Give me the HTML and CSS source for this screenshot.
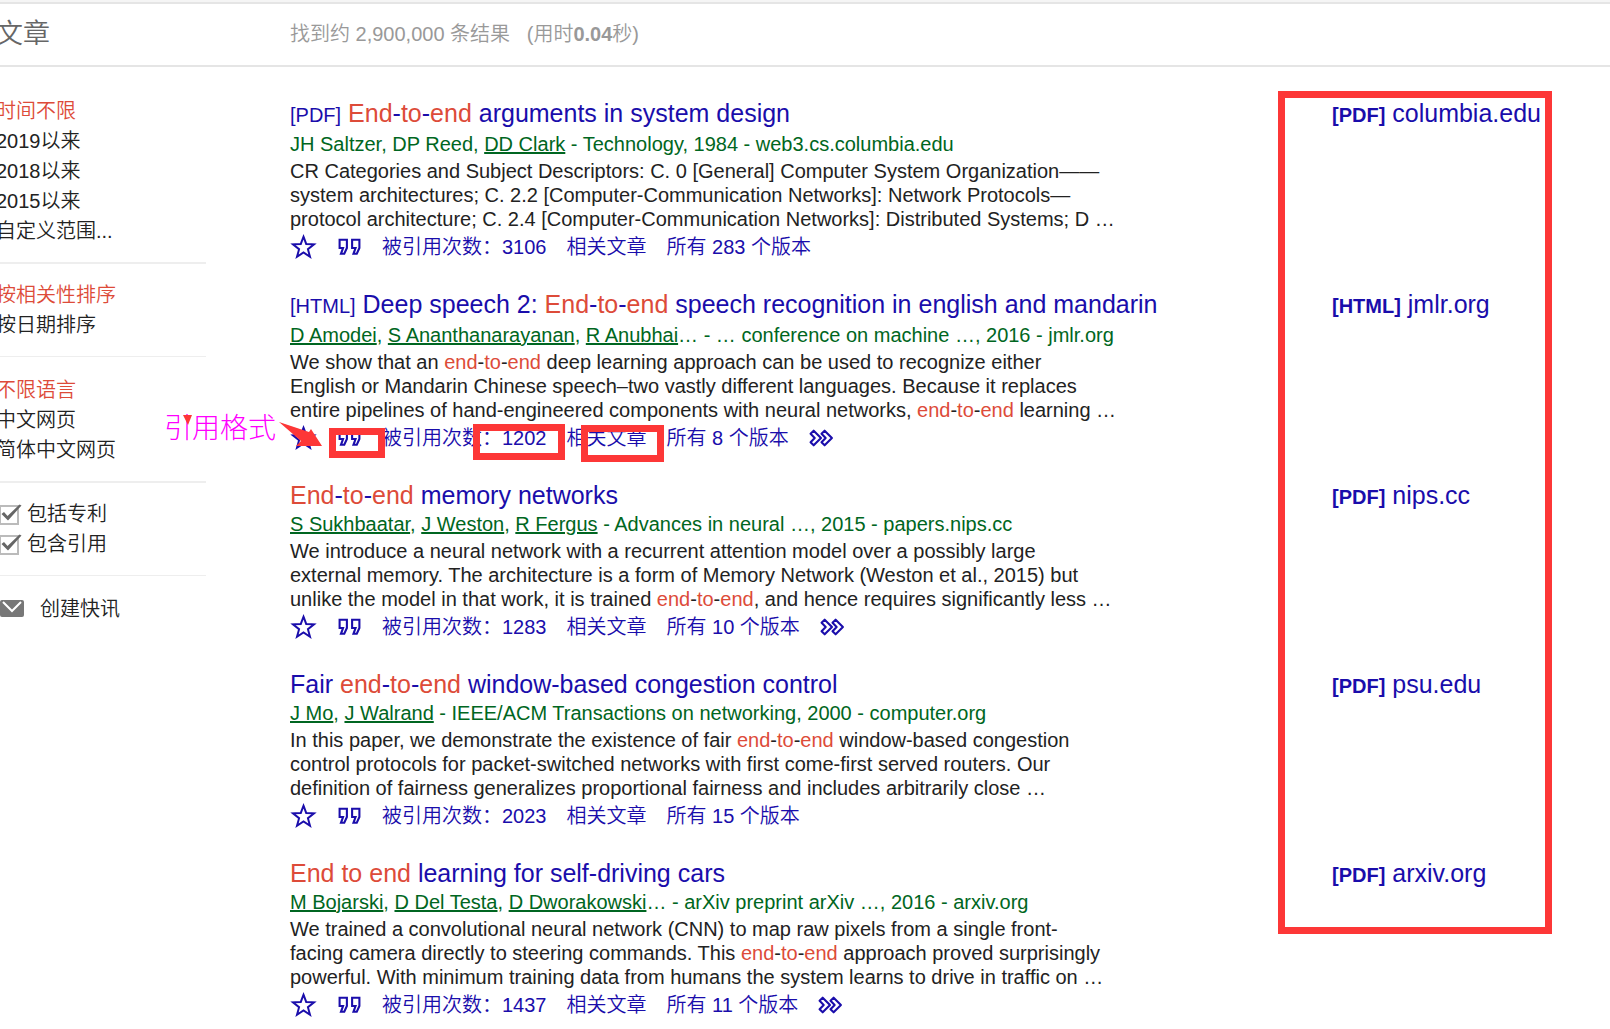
FILE: index.html
```html
<!DOCTYPE html>
<html lang="zh-CN">
<head>
<meta charset="utf-8">
<title>End-to-end - 学术搜索</title>
<link rel="stylesheet" href="styles.css">
</head>
<body>
<svg class="sprite" aria-hidden="true">
  <symbol id="star" viewBox="0 0 22 22"><path d="M11 2.6 13.2 8.5 19.6 8.8 14.6 12.8 16.3 19 11 15.5 5.7 19 7.4 12.8 2.4 8.8 8.8 8.5Z"/></symbol>
  <symbol id="quote" viewBox="0 0 24 22"><path d="M2.500 4H9.500V12L7 17.500H3.800L5.800 12H2.500ZM14.500 4H21.500V12L19 17.500H15.800L17.800 12H14.500Z"/></symbol>
  <symbol id="more" viewBox="0 0 24 22"><path stroke-linejoin="round" d="M1.500 7 4.500 4 11.500 11 4.500 18 1.500 15 5.500 11ZM12 7 15 4 22 11 15 18 12 15 16 11Z"/></symbol>
</svg>
<div class="page">
  <header class="topbar">
    <h1 class="section">文章</h1>
    <p class="count">找到约 2,900,000 条结果 &nbsp; (用时<b>0.04</b>秒)</p>
  </header>
  <div class="layout">
    <nav class="sidebar">
      <ul class="group">
        <li><a class="current" href="#">时间不限</a></li>
        <li><a href="#">2019以来</a></li>
        <li><a href="#">2018以来</a></li>
        <li><a href="#">2015以来</a></li>
        <li><a href="#">自定义范围...</a></li>
      </ul>
      <ul class="group">
        <li><a class="current" href="#">按相关性排序</a></li>
        <li><a href="#">按日期排序</a></li>
      </ul>
      <ul class="group">
        <li><a class="current" href="#">不限语言</a></li>
        <li><a href="#">中文网页</a></li>
        <li><a href="#">简体中文网页</a></li>
      </ul>
      <ul class="group">
        <li><label class="check"><input type="checkbox" checked><svg viewBox="0 0 26 22"><path class="box" d="M4 3H22V21H4Z"/><path class="tick" d="M5.500 11 8 9 11.500 13 23.500 1.500 25.500 2.500 12 17.500Z"/></svg>包括专利</label></li>
        <li><label class="check"><input type="checkbox" checked><svg viewBox="0 0 26 22"><path class="box" d="M4 3H22V21H4Z"/><path class="tick" d="M5.500 11 8 9 11.500 13 23.500 1.500 25.500 2.500 12 17.500Z"/></svg>包含引用</label></li>
      </ul>
      <ul class="group">
        <li><a class="alert" href="#"><svg viewBox="0 0 24 18"><rect width="24" height="17" rx="2"/><path d="M3 2 12 11 21 2"/></svg>创建快讯</a></li>
      </ul>
    </nav>
    <main class="results">
      <article class="result">
        <div class="body">
          <h2 class="title tagged"><span class="tag">[PDF]</span> <a href="#"><em>End</em>-<em>to</em>-<em>end</em> arguments in system design</a></h2>
          <p class="authors">JH Saltzer, DP Reed, <a href="#">DD Clark</a> - Technology, 1984 - web3.cs.columbia.edu</p>
          <p class="snippet">CR Categories and Subject Descriptors: C. 0 [General] Computer System Organization——<br>system architectures; C. 2.2 [Computer-Communication Networks]: Network Protocols—<br>protocol architecture; C. 2.4 [Computer-Communication Networks]: Distributed Systems; D …</p>
          <div class="links"><a href="#" aria-label="保存"><svg class="star"><use href="#star"/></svg></a><a href="#" aria-label="引用"><svg class="quote"><use href="#quote"/></svg></a><a href="#">被引用次数：3106</a><a href="#">相关文章</a><a href="#">所有 283 个版本</a></div>
        </div>
        <p class="source"><a href="#"><b>[PDF]</b> columbia.edu</a></p>
      </article>
      <article class="result">
        <div class="body">
          <h2 class="title tagged"><span class="tag">[HTML]</span> <a href="#">Deep speech 2: <em>End</em>-<em>to</em>-<em>end</em> speech recognition in english and mandarin</a></h2>
          <p class="authors"><a href="#">D Amodei</a>, <a href="#">S Ananthanarayanan</a>, <a href="#">R Anubhai</a>… - … conference on machine …, 2016 - jmlr.org</p>
          <p class="snippet">We show that an <em>end</em>-<em>to</em>-<em>end</em> deep learning approach can be used to recognize either<br>English or Mandarin Chinese speech–two vastly different languages. Because it replaces<br>entire pipelines of hand-engineered components with neural networks, <em>end</em>-<em>to</em>-<em>end</em> learning …</p>
          <div class="links"><a href="#" aria-label="保存"><svg class="star"><use href="#star"/></svg></a><a href="#" aria-label="引用"><svg class="quote"><use href="#quote"/></svg></a><a href="#">被引用次数：1202</a><a href="#">相关文章</a><a href="#">所有 8 个版本</a><a href="#" aria-label="更多"><svg class="more"><use href="#more"/></svg></a></div>
        </div>
        <p class="source"><a href="#"><b>[HTML]</b> jmlr.org</a></p>
      </article>
      <article class="result">
        <div class="body">
          <h2 class="title"><a href="#"><em>End</em>-<em>to</em>-<em>end</em> memory networks</a></h2>
          <p class="authors"><a href="#">S Sukhbaatar</a>, <a href="#">J Weston</a>, <a href="#">R Fergus</a> - Advances in neural …, 2015 - papers.nips.cc</p>
          <p class="snippet">We introduce a neural network with a recurrent attention model over a possibly large<br>external memory. The architecture is a form of Memory Network (Weston et al., 2015) but<br>unlike the model in that work, it is trained <em>end</em>-<em>to</em>-<em>end</em>, and hence requires significantly less …</p>
          <div class="links"><a href="#" aria-label="保存"><svg class="star"><use href="#star"/></svg></a><a href="#" aria-label="引用"><svg class="quote"><use href="#quote"/></svg></a><a href="#">被引用次数：1283</a><a href="#">相关文章</a><a href="#">所有 10 个版本</a><a href="#" aria-label="更多"><svg class="more"><use href="#more"/></svg></a></div>
        </div>
        <p class="source"><a href="#"><b>[PDF]</b> nips.cc</a></p>
      </article>
      <article class="result">
        <div class="body">
          <h2 class="title"><a href="#">Fair <em>end</em>-<em>to</em>-<em>end</em> window-based congestion control</a></h2>
          <p class="authors"><a href="#">J Mo</a>, <a href="#">J Walrand</a> - IEEE/ACM Transactions on networking, 2000 - computer.org</p>
          <p class="snippet">In this paper, we demonstrate the existence of fair <em>end</em>-<em>to</em>-<em>end</em> window-based congestion<br>control protocols for packet-switched networks with first come-first served routers. Our<br>definition of fairness generalizes proportional fairness and includes arbitrarily close …</p>
          <div class="links"><a href="#" aria-label="保存"><svg class="star"><use href="#star"/></svg></a><a href="#" aria-label="引用"><svg class="quote"><use href="#quote"/></svg></a><a href="#">被引用次数：2023</a><a href="#">相关文章</a><a href="#">所有 15 个版本</a></div>
        </div>
        <p class="source"><a href="#"><b>[PDF]</b> psu.edu</a></p>
      </article>
      <article class="result">
        <div class="body">
          <h2 class="title"><a href="#"><em>End to end</em> learning for self-driving cars</a></h2>
          <p class="authors"><a href="#">M Bojarski</a>, <a href="#">D Del Testa</a>, <a href="#">D Dworakowski</a>… - arXiv preprint arXiv …, 2016 - arxiv.org</p>
          <p class="snippet">We trained a convolutional neural network (CNN) to map raw pixels from a single front-<br>facing camera directly to steering commands. This <em>end</em>-<em>to</em>-<em>end</em> approach proved surprisingly<br>powerful. With minimum training data from humans the system learns to drive in traffic on …</p>
          <div class="links"><a href="#" aria-label="保存"><svg class="star"><use href="#star"/></svg></a><a href="#" aria-label="引用"><svg class="quote"><use href="#quote"/></svg></a><a href="#">被引用次数：1437</a><a href="#">相关文章</a><a href="#">所有 11 个版本</a><a href="#" aria-label="更多"><svg class="more"><use href="#more"/></svg></a></div>
        </div>
        <p class="source"><a href="#"><b>[PDF]</b> arxiv.org</a></p>
      </article>
    </main>
  </div>
  <span class="note">引用格式</span>
  <svg class="arrow" viewBox="0 0 150 40"><path d="M2 0H11L7 10ZM98 7 128 17 130 14 141 31 115 31 120 26Z"/></svg>
  <div class="mark mark-cite"></div>
  <div class="mark mark-cited"></div>
  <div class="mark mark-related"></div>
  <div class="mark mark-sources"></div>
</div>
</body>
</html>
```
FILE: styles.css
```css
* { box-sizing: border-box; }
body {
  margin: 0;
  background: #fff;
  color: #222;
  font: 20px/24px "Liberation Sans", "Noto Sans CJK SC", sans-serif;
  font-weight: 350;
}
h1, h2, p, ul { margin: 0; padding: 0; font-weight: inherit; }
ul { list-style: none; }
a { color: inherit; text-decoration: none; }
em { font-style: normal; color: #dd4b39; }
b { font-weight: 700; }
.sprite { display: none; }
.page { position: relative; overflow: hidden; }

.topbar {
  display: grid;
  grid-template-columns: 290px 1fr;
  align-items: center;
  height: 67px;
  padding-top: 3px;
  border-bottom: 2px solid #e5e5e5;
  box-shadow: inset 0 2px #f5f5f5, inset 0 4px #e5e5e5;
}
.section { margin-left: -4px; font-size: 27px; line-height: 30px; color: #666; }
.count { color: #999; }

.layout {
  display: grid;
  grid-template-columns: 206px 1fr;
  column-gap: 84px;
  padding-top: 29px;
}
.group {
  padding-bottom: 16px;
  margin-bottom: 16px;
  border-bottom: 2px solid #eee;
  line-height: 30px;
}
.group:nth-child(even) { border-bottom-width: 1px; margin-bottom: 18px; }
.group:last-child { border: 0; }
.group li { height: 30px; margin-left: -4px; white-space: nowrap; }
.current { color: #dd4b39; }
.check { display: flex; align-items: center; gap: 5px; }
.check input { position: absolute; opacity: 0; }
.check svg { width: 26px; height: 22px; }
.box { fill: none; stroke: #bbb; stroke-width: 2; }
.tick { fill: #666; }
.alert { display: flex; align-items: center; gap: 16px; margin-left: 4px; }
.alert svg { width: 24px; height: 18px; fill: #777; }
.alert path { fill: none; stroke: #fff; stroke-width: 2; }

.results { padding-top: 3px; }
.result {
  display: grid;
  grid-template-columns: 1fr 278px;
  margin-bottom: 27px;
  white-space: nowrap;
}
.title, .source { font-size: 25px; line-height: 29px; color: #1a0dab; }
.tagged { padding-bottom: 2px; }
.tag, .source b { font-size: 20px; line-height: 20px; }
.authors { line-height: 29px; color: #006621; }
.authors a { text-decoration: underline; }
.links { display: flex; line-height: 32px; color: #1a0dab; }
.links a { margin-right: 20px; }
.links svg { display: block; height: 32px; fill: none; stroke: #1a0dab; stroke-width: 2; }
.links .star { width: 27px; stroke-width: 1.6; }
.quote, .more { width: 25px; }

.mark { position: absolute; border: 7px solid #fd3737; }
.mark-cite { left: 329px; top: 428px; width: 56px; height: 30px; }
.mark-cited { left: 473px; top: 424px; width: 92px; height: 36px; }
.mark-related { left: 581px; top: 425px; width: 83px; height: 37px; }
.mark-sources { right: 58px; top: 91px; width: 274px; height: 843px; }
.note {
  position: absolute;
  left: 164px;
  top: 411px;
  font-size: 28px;
  line-height: 36px;
  font-weight: 300;
  color: #f0f;
}
.arrow { position: absolute; left: 181px; top: 415px; width: 150px; height: 40px; fill: #fd3737; }
```
